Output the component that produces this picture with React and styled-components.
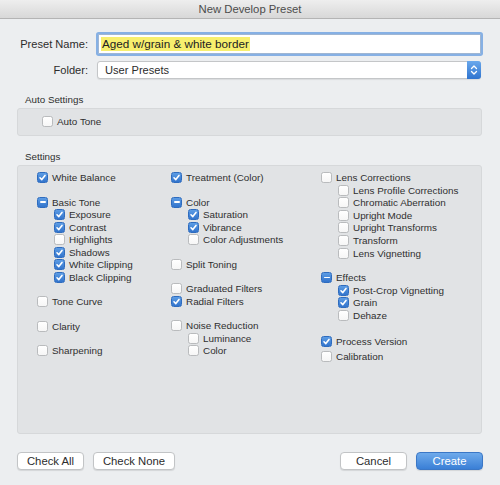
import React from 'react';
import styled, { createGlobalStyle } from 'styled-components';

const GlobalStyle = createGlobalStyle`
  html, body {
    margin: 0;
    padding: 0;
    background: #eceef0;
  }
  body {
    font-family: 'Liberation Sans', Arial, sans-serif;
    color: #2e2e2e;
  }
`;

// each column is a list of blocks; a block has an optional parent and its children
const columns = [
  [
    { items: [{ label: 'White Balance', state: 'on' }] },
    {
      parent: { label: 'Basic Tone', state: 'mixed' },
      items: [
        { label: 'Exposure', state: 'on' },
        { label: 'Contrast', state: 'on' },
        { label: 'Highlights', state: 'off' },
        { label: 'Shadows', state: 'on' },
        { label: 'White Clipping', state: 'on' },
        { label: 'Black Clipping', state: 'on' },
      ],
    },
    { items: [{ label: 'Tone Curve', state: 'off' }] },
    { items: [{ label: 'Clarity', state: 'off' }] },
    { items: [{ label: 'Sharpening', state: 'off' }] },
  ],
  [
    { items: [{ label: 'Treatment (Color)', state: 'on' }] },
    {
      parent: { label: 'Color', state: 'mixed' },
      items: [
        { label: 'Saturation', state: 'on' },
        { label: 'Vibrance', state: 'on' },
        { label: 'Color Adjustments', state: 'off' },
      ],
    },
    { items: [{ label: 'Split Toning', state: 'off' }] },
    {
      items: [
        { label: 'Graduated Filters', state: 'off' },
        { label: 'Radial Filters', state: 'on' },
      ],
    },
    {
      parent: { label: 'Noise Reduction', state: 'off' },
      items: [
        { label: 'Luminance', state: 'off' },
        { label: 'Color', state: 'off' },
      ],
    },
  ],
  [
    {
      parent: { label: 'Lens Corrections', state: 'off' },
      items: [
        { label: 'Lens Profile Corrections', state: 'off' },
        { label: 'Chromatic Aberration', state: 'off' },
        { label: 'Upright Mode', state: 'off' },
        { label: 'Upright Transforms', state: 'off' },
        { label: 'Transform', state: 'off' },
        { label: 'Lens Vignetting', state: 'off' },
      ],
    },
    {
      parent: { label: 'Effects', state: 'mixed' },
      items: [
        { label: 'Post-Crop Vignetting', state: 'on' },
        { label: 'Grain', state: 'on' },
        { label: 'Dehaze', state: 'off' },
      ],
    },
    { items: [{ label: 'Process Version', state: 'on' }], gap: 13.5 },
    { items: [{ label: 'Calibration', state: 'off' }], gap: 2.5 },
  ],
];

function Check({ state }) {
  return (
    <Box $state={state}>
      {state === 'on' && (
        <svg width="9" height="9" viewBox="0 0 9 9">
          <path d="M2 4.8 L3.8 6.6 L7 2.4" fill="none" stroke="#fff" strokeWidth="1.6" strokeLinecap="round" strokeLinejoin="round" />
        </svg>
      )}
      {state === 'mixed' && <Dash />}
    </Box>
  );
}

function Option({ label, state, sub }) {
  return (
    <Row $sub={sub}>
      <Check state={state} />
      <span>{label}</span>
    </Row>
  );
}

function App() {
  return (
    <Dialog>
      <GlobalStyle />
      <TitleBar>New Develop Preset</TitleBar>

      <Form>
        <FieldLabel>Preset Name:</FieldLabel>
        <NameInput>
          <Selected>Aged w/grain &amp; white border</Selected>
        </NameInput>
        <FieldLabel>Folder:</FieldLabel>
        <Select>
          <span>User Presets</span>
          <Stepper>
            <svg width="8" height="12" viewBox="0 0 8 12">
              <path d="M1.5 4.5 L4 2 L6.5 4.5 M1.5 7.5 L4 10 L6.5 7.5" fill="none" stroke="#fff" strokeWidth="1.3" strokeLinecap="round" strokeLinejoin="round" />
            </svg>
          </Stepper>
        </Select>
      </Form>

      <SectionTitle $top={15}>Auto Settings</SectionTitle>
      <Panel>
        <AutoRow>
          <Option label="Auto Tone" state="off" />
        </AutoRow>
      </Panel>

      <SectionTitle $top={15}>Settings</SectionTitle>
      <Panel>
        <Columns>
          {columns.map((col, ci) => (
            <Column key={ci}>
              {col.map((block, bi) => (
                <Block key={bi} $gap={bi === 0 ? 0 : block.gap ?? 11.9}>
                  {block.parent && <Option {...block.parent} />}
                  {block.items.map((it) => (
                    <Option key={it.label} {...it} sub={!!block.parent} />
                  ))}
                </Block>
              ))}
            </Column>
          ))}
        </Columns>
      </Panel>

      <Footer>
        <ButtonGroup>
          <Button $w={67}>Check All</Button>
          <Button $w={82}>Check None</Button>
        </ButtonGroup>
        <ButtonGroup>
          <Button $w={67}>Cancel</Button>
          <Button $w={67} $primary>Create</Button>
        </ButtonGroup>
      </Footer>
    </Dialog>
  );
}

const Dialog = styled.div`
  width: 500px;
  height: 485px;
  background: #eceef0;
  display: flex;
  flex-direction: column;
  overflow: hidden;
`;

const TitleBar = styled.div`
  height: 18px;
  line-height: 19px;
  text-align: center;
  font-size: 11.3px;
  color: #4c4c4c;
  background: linear-gradient(#eeeeee, #d8d8d8);
  border-bottom: 1px solid #b4b4b4;
  flex-shrink: 0;
`;

const Form = styled.div`
  display: grid;
  grid-template-columns: 71px 1fr;
  column-gap: 9px;
  row-gap: 7px;
  align-items: center;
  padding: 15px 17px 0 17px;
`;

const FieldLabel = styled.div`
  text-align: right;
  font-size: 11.1px;
  color: #2c2c2c;
`;

const NameInput = styled.div`
  height: 18px;
  margin: 0 2px 0 1px;
  background: #fff;
  border: 1px solid #9fb6d3;
  box-shadow: 0 0 0 2px #86b0e4;
  border-radius: 1px;
  display: flex;
  align-items: center;
  padding-left: 2px;
`;

const Selected = styled.span`
  background: #f7ef6e;
  font-size: 11.7px;
  line-height: 14px;
  padding: 0 1px;
  color: #222;
`;

const Select = styled.div`
  height: 16px;
  margin-right: 2px;
  background: #fff;
  border: 1px solid #c4c6c8;
  border-radius: 3px;
  box-shadow: 0 1px 1px rgba(0, 0, 0, 0.08);
  display: flex;
  align-items: center;
  justify-content: space-between;
  padding-left: 7px;
  font-size: 11.1px;
  color: #2c2c2c;
`;

const Stepper = styled.div`
  width: 14px;
  height: 18px;
  margin-right: -1px;
  border-radius: 0 3px 3px 0;
  background: linear-gradient(#6aa8ec, #2f74cf);
  display: flex;
  align-items: center;
  justify-content: center;
`;

const SectionTitle = styled.div`
  margin: ${(p) => p.$top}px 0 0 25px;
  font-size: 9.8px;
  line-height: 12px;
  color: #2e2e2e;
`;

const Panel = styled.div`
  margin: 2px 18px 0 17px;
  background: #e1e3e5;
  border: 1px solid #d6d8da;
  border-radius: 3px;
`;

const AutoRow = styled.div`
  height: 26px;
  display: flex;
  align-items: center;
  padding-left: 24px;
`;

const Columns = styled.div`
  display: grid;
  grid-template-columns: 134px 150px 1fr;
  padding: 5.5px 0 0 19px;
  height: 267px;
  box-sizing: border-box;
`;

const Column = styled.div`
  display: flex;
  flex-direction: column;
`;

const Block = styled.div`
  margin-top: ${(p) => p.$gap}px;
`;

const Row = styled.div`
  height: 12.55px;
  display: flex;
  align-items: center;
  gap: 4px;
  padding-left: ${(p) => (p.$sub ? 17 : 0)}px;
  font-size: 9.9px;
  color: #2f2f2f;
  white-space: nowrap;
`;

const Box = styled.div`
  width: 11px;
  height: 11px;
  box-sizing: border-box;
  border-radius: 2.5px;
  flex-shrink: 0;
  display: flex;
  align-items: center;
  justify-content: center;
  border: 1px solid ${(p) => (p.$state === 'off' ? '#b9bbbd' : '#2e6cbf')};
  background: ${(p) =>
    p.$state === 'off' ? 'linear-gradient(#ffffff, #f6f6f6)' : 'linear-gradient(#5c9ce4, #3274cc)'};
`;

const Dash = styled.div`
  width: 6px;
  height: 1.6px;
  background: #fff;
  border-radius: 1px;
`;

const Footer = styled.div`
  display: flex;
  justify-content: space-between;
  padding: 0 17px;
  margin-top: 18px;
`;

const ButtonGroup = styled.div`
  display: flex;
  gap: 9px;
`;

const Button = styled.button`
  width: ${(p) => p.$w}px;
  height: 18px;
  padding: 0;
  font-family: 'Liberation Sans', Arial, sans-serif;
  font-size: 11.3px;
  border-radius: 4px;
  cursor: pointer;
  color: ${(p) => (p.$primary ? '#ffffff' : '#2c2c2c')};
  border: 1px solid ${(p) => (p.$primary ? '#3b77c6' : '#c2c4c6')};
  background: ${(p) => (p.$primary ? 'linear-gradient(#6eaaeb, #3a7fd6)' : '#ffffff')};
  box-shadow: 0 1px 1px rgba(0, 0, 0, 0.1);
`;

export default App;
